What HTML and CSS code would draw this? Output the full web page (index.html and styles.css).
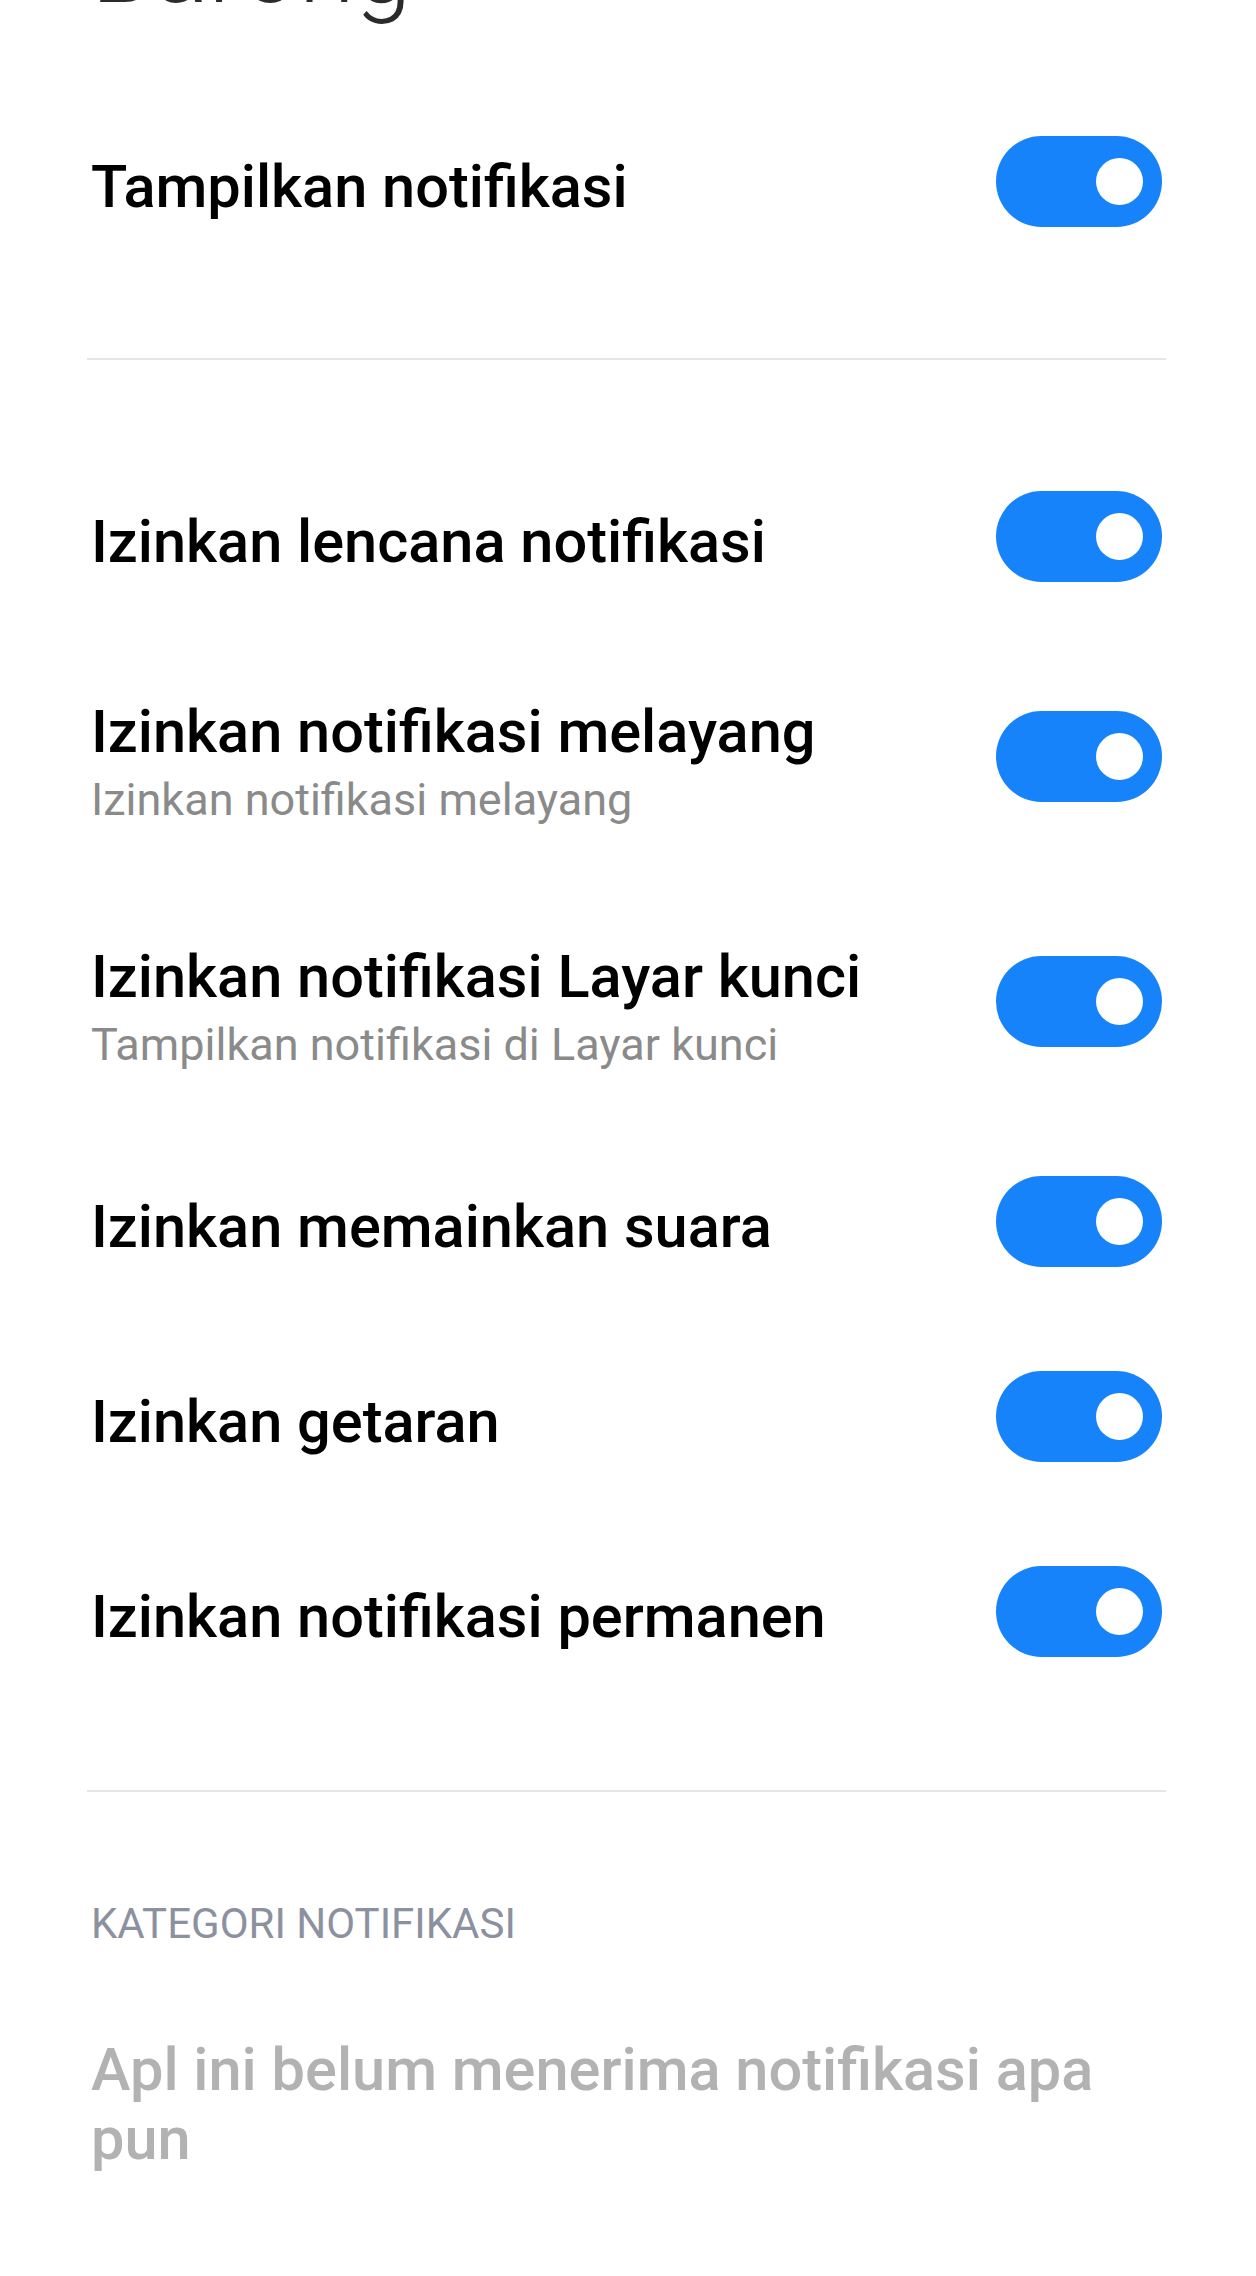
FILE: index.html
```html
<!DOCTYPE html>
<html lang="id">
<head>
<meta charset="utf-8">
<title>Notifikasi</title>
<link rel="stylesheet" href="styles.css">
</head>
<body>
<div class="page">
  <h1 class="app-title">Barong</h1>

  <div class="row row-first">
    <div class="text"><div class="title">Tampilkan notifikasi</div></div>
    <span class="toggle on"><span class="knob"></span></span>
  </div>

  <hr class="divider divider-top">

  <div class="row">
    <div class="text"><div class="title">Izinkan lencana notifikasi</div></div>
    <span class="toggle on"><span class="knob"></span></span>
  </div>
  <div class="row row-double">
    <div class="text">
      <div class="title">Izinkan notifikasi melayang</div>
      <div class="sub">Izinkan notifikasi melayang</div>
    </div>
    <span class="toggle on"><span class="knob"></span></span>
  </div>
  <div class="row row-double">
    <div class="text">
      <div class="title">Izinkan notifikasi Layar kunci</div>
      <div class="sub">Tampilkan notifikasi di Layar kunci</div>
    </div>
    <span class="toggle on"><span class="knob"></span></span>
  </div>
  <div class="row">
    <div class="text"><div class="title">Izinkan memainkan suara</div></div>
    <span class="toggle on"><span class="knob"></span></span>
  </div>
  <div class="row">
    <div class="text"><div class="title">Izinkan getaran</div></div>
    <span class="toggle on"><span class="knob"></span></span>
  </div>
  <div class="row">
    <div class="text"><div class="title">Izinkan notifikasi permanen</div></div>
    <span class="toggle on"><span class="knob"></span></span>
  </div>

  <hr class="divider divider-bottom">

  <div class="section-label">KATEGORI NOTIFIKASI</div>
  <p class="empty">Apl ini belum menerima notifikasi apa pun</p>
</div>
</body>
</html>
```

FILE: styles.css
```css
html, body {
  margin: 0;
  padding: 0;
  background: #ffffff;
}

body {
  font-family: Roboto, "Noto Sans", "Liberation Sans", sans-serif;
  color: #000;
  overflow: hidden;
}

.page {
  padding: 0 90px 0 91px;
  height: 2276px;
  box-sizing: border-box;
}

.app-title {
  margin: -84px 0 0 0;
  font-size: 102px;
  line-height: 1;
  font-weight: 300;
  color: #2b2b2b;
  height: 102px;
}

.row {
  display: flex;
  align-items: center;
  justify-content: space-between;
  height: 195px;
}

.row-first {
  margin-top: 66px;
}

.row-double {
  height: 245px;
}

.text {
  display: flex;
  flex-direction: column;
  padding-top: 10px;
}

.title {
  font-size: 59.5px;
  font-weight: 500;
  line-height: 70px;
  color: #000;
}

.sub {
  font-size: 45px;
  font-weight: 400;
  line-height: 54px;
  margin-top: 6px;
  color: #8a8a8a;
}

.toggle {
  position: relative;
  flex: none;
  width: 166px;
  height: 91px;
  border-radius: 46px;
  background: #1683fb;
  margin-right: 4px;
}

.knob {
  position: absolute;
  top: 22px;
  right: 19px;
  width: 47px;
  height: 47px;
  border-radius: 50%;
  background: #ffffff;
}

.divider {
  border: 0;
  height: 2px;
  background: #e6e6e6;
  margin: 0 0 0 -4px;
}

.divider-top {
  margin-top: 79px;
  margin-bottom: 79px;
}

.divider-bottom {
  margin-top: 81px;
}

.section-label {
  margin-top: 105px;
  font-size: 42px;
  line-height: 54px;
  font-weight: 400;
  color: #8c91a0;
}

.empty {
  margin: 85px 0 0 0;
  font-size: 59.5px;
  line-height: 69px;
  font-weight: 500;
  color: #b2b2b2;
}
```
